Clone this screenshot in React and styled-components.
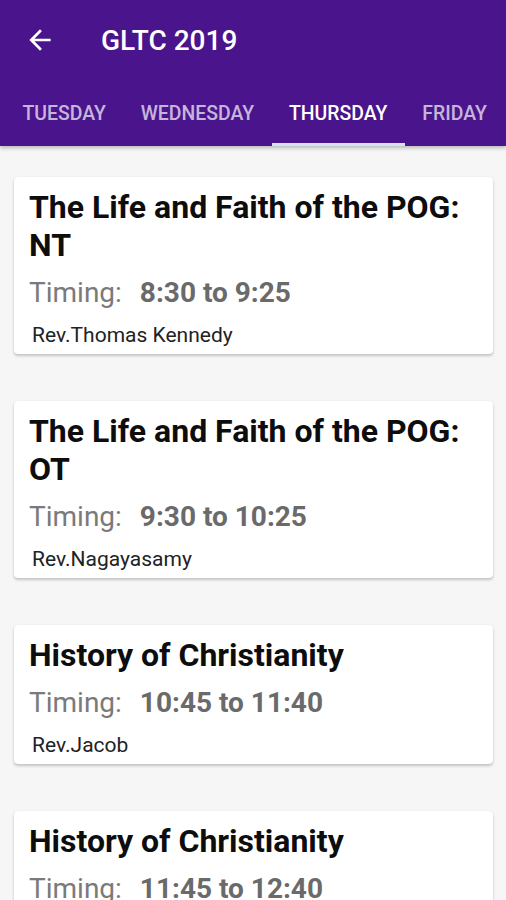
import React from 'react'
import styled, { createGlobalStyle } from 'styled-components'

const GlobalStyle = createGlobalStyle`
  html, body {
    margin: 0;
    padding: 0;
    background: #f6f6f6;
    font-family: Roboto, "Noto Sans", sans-serif;
  }
`

const Page = styled.div`
  width: 506px;
  height: 900px;
  overflow: hidden;
  background: #f6f6f6;
`

const Header = styled.header`
  background: #4a148c;
  box-shadow: 0 2px 4px rgba(0, 0, 0, 0.25);
  position: relative;
  z-index: 1;
`

const Toolbar = styled.div`
  height: 80px;
  display: flex;
  align-items: center;
`

const BackButton = styled.div`
  width: 32px;
  height: 32px;
  margin-left: 24px;
  display: flex;
  align-items: center;
  justify-content: center;
  color: #fff;
`

const Title = styled.h1`
  margin: 0 0 0 45px;
  font-size: 28px;
  font-weight: 500;
  color: #fff;
`

const Tabs = styled.div`
  height: 66px;
  display: flex;
  padding-left: 5px;
`

const Tab = styled.div`
  position: relative;
  display: flex;
  align-items: center;
  padding: 0 17.5px;
  font-size: 19.4px;
  font-weight: 500;
  color: ${p => (p.$active ? '#ffffff' : 'rgba(255, 255, 255, 0.7)')};
  white-space: nowrap;

  &::after {
    content: '';
    display: ${p => (p.$active ? 'block' : 'none')};
    position: absolute;
    left: 0;
    right: 0;
    bottom: 0;
    height: 3px;
    background: #d3e3f2;
  }
`

const List = styled.div`
  display: flex;
  flex-direction: column;
  gap: 47px;
  padding: 31px 13px 0 14px;
`

const Card = styled.div`
  background: #fff;
  border-radius: 4px;
  box-shadow: 0 2px 3px rgba(0, 0, 0, 0.2), 0 0 1px rgba(0, 0, 0, 0.12);
  padding: 11px 15px 6px 15px;
`

const SessionTitle = styled.div`
  font-size: 32px;
  line-height: 38px;
  font-weight: 700;
  color: #0d0d0d;
`

const TimingRow = styled.div`
  margin-top: 12px;
  display: flex;
  align-items: baseline;
  font-size: 28px;
  line-height: 34px;
`

const TimingLabel = styled.span`
  color: #7a7a7a;
`

const TimingValue = styled.span`
  margin-left: 18px;
  font-weight: 700;
  color: #6a6a6a;
`

const Speaker = styled.div`
  margin-top: 12px;
  margin-left: 3px;
  font-size: 21px;
  line-height: 26px;
  color: #222;
`

const BackIcon = () => (
  <svg width="32" height="32" viewBox="0 0 24 24" fill="currentColor">
    <path d="M20 11H7.83l5.59-5.59L12 4l-8 8 8 8 1.41-1.41L7.83 13H20v-2z" />
  </svg>
)

const days = ['TUESDAY', 'WEDNESDAY', 'THURSDAY', 'FRIDAY']

const sessions = [
  { title: 'The Life and Faith of the POG: NT', time: '8:30 to 9:25', speaker: 'Rev.Thomas Kennedy' },
  { title: 'The Life and Faith of the POG: OT', time: '9:30 to 10:25', speaker: 'Rev.Nagayasamy' },
  { title: 'History of Christianity', time: '10:45 to 11:40', speaker: 'Rev.Jacob' },
  { title: 'History of Christianity', time: '11:45 to 12:40', speaker: 'Rev.Jacob' },
]

export default function App() {
  return (
    <Page>
      <GlobalStyle />
      <Header>
        <Toolbar>
          <BackButton>
            <BackIcon />
          </BackButton>
          <Title>GLTC 2019</Title>
        </Toolbar>
        <Tabs>
          {days.map(d => (
            <Tab key={d} $active={d === 'THURSDAY'}>
              {d}
            </Tab>
          ))}
        </Tabs>
      </Header>
      <List>
        {sessions.map((s, i) => (
          <Card key={i}>
            <SessionTitle>{s.title}</SessionTitle>
            <TimingRow>
              <TimingLabel>Timing:</TimingLabel>
              <TimingValue>{s.time}</TimingValue>
            </TimingRow>
            <Speaker>{s.speaker}</Speaker>
          </Card>
        ))}
      </List>
    </Page>
  )
}
